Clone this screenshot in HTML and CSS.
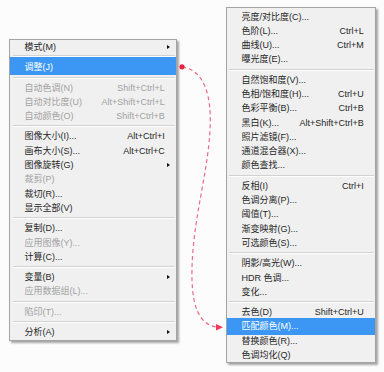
FILE: index.html
```html
<!DOCTYPE html>
<html lang="zh">
<head>
<meta charset="utf-8">
<link rel="stylesheet" href="styles.css">
</head>
<body>
<div class="stage">
  <div class="menu menu-left">
    <div class="row"><span>模式(M)</span><i class="arrow"></i></div>
    <div class="sep sep-short"></div>
    <div class="row active active-left"><span>调整(J)</span></div>
    <div class="sep"></div>
    <div class="row off"><span>自动色调(N)</span><span class="key">Shift+Ctrl+L</span></div>
    <div class="row off"><span>自动对比度(U)</span><span class="key">Alt+Shift+Ctrl+L</span></div>
    <div class="row off"><span>自动颜色(O)</span><span class="key">Shift+Ctrl+B</span></div>
    <div class="sep"></div>
    <div class="row"><span>图像大小(I)...</span><span class="key">Alt+Ctrl+I</span></div>
    <div class="row"><span>画布大小(S)...</span><span class="key">Alt+Ctrl+C</span></div>
    <div class="row"><span>图像旋转(G)</span><i class="arrow"></i></div>
    <div class="row off"><span>裁剪(P)</span></div>
    <div class="row"><span>裁切(R)...</span></div>
    <div class="row"><span>显示全部(V)</span></div>
    <div class="sep"></div>
    <div class="row"><span>复制(D)...</span></div>
    <div class="row off"><span>应用图像(Y)...</span></div>
    <div class="row"><span>计算(C)...</span></div>
    <div class="sep"></div>
    <div class="row"><span>变量(B)</span><i class="arrow"></i></div>
    <div class="row off"><span>应用数据组(L)...</span></div>
    <div class="sep"></div>
    <div class="row off"><span>陷印(T)...</span></div>
    <div class="sep"></div>
    <div class="row"><span>分析(A)</span><i class="arrow"></i></div>
  </div>
  <div class="menu menu-right">
    <div class="row"><span>亮度/对比度(C)...</span></div>
    <div class="row"><span>色阶(L)...</span><span class="key">Ctrl+L</span></div>
    <div class="row"><span>曲线(U)...</span><span class="key">Ctrl+M</span></div>
    <div class="row"><span>曝光度(E)...</span></div>
    <div class="sep"></div>
    <div class="row"><span>自然饱和度(V)...</span></div>
    <div class="row"><span>色相/饱和度(H)...</span><span class="key">Ctrl+U</span></div>
    <div class="row"><span>色彩平衡(B)...</span><span class="key">Ctrl+B</span></div>
    <div class="row"><span>黑白(K)...</span><span class="key">Alt+Shift+Ctrl+B</span></div>
    <div class="row"><span>照片滤镜(F)...</span></div>
    <div class="row"><span>通道混合器(X)...</span></div>
    <div class="row"><span>颜色查找...</span></div>
    <div class="sep"></div>
    <div class="row"><span>反相(I)</span><span class="key">Ctrl+I</span></div>
    <div class="row"><span>色调分离(P)...</span></div>
    <div class="row"><span>阈值(T)...</span></div>
    <div class="row"><span>渐变映射(G)...</span></div>
    <div class="row"><span>可选颜色(S)...</span></div>
    <div class="sep"></div>
    <div class="row"><span>阴影/高光(W)...</span></div>
    <div class="row"><span>HDR 色调...</span></div>
    <div class="row"><span>变化...</span></div>
    <div class="sep"></div>
    <div class="row"><span>去色(D)</span><span class="key">Shift+Ctrl+U</span></div>
    <div class="row active active-right"><span>匹配颜色(M)...</span></div>
    <div class="row"><span>替换颜色(R)...</span></div>
    <div class="row"><span>色调均化(Q)</span></div>
  </div>
  <svg class="link" width="384" height="372" viewBox="0 0 384 372">
    <path d="M182,67 C204,70 212,95 210,130 C208,172 193,220 192,268 C191,306 199,325 217,327" fill="none" stroke="#f06a86" stroke-width="1.2" stroke-dasharray="4 3"/>
    <path d="M216,324 L223,327.3 L216,330.5 Z" fill="#f03a5c"/>
    <circle cx="182" cy="66.8" r="2.6" fill="#e8223e"/>
  </svg>
</div>
</body>
</html>
```

FILE: styles.css
```css
html, body {
  margin: 0;
  padding: 0;
  background: #fcfcfc;
}

.stage {
  position: relative;
  width: 384px;
  height: 372px;
  display: flex;
  align-items: flex-start;
  font-family: "Liberation Sans", "Noto Sans CJK SC", sans-serif;
  font-size: 9px;
  color: #262626;
}

.menu {
  background: #f0f0f0;
  border: 1px solid #a3a3a3;
  box-shadow: 2px 2px 2px rgba(0, 0, 0, 0.35);
  box-sizing: border-box;
  display: flex;
  flex-direction: column;
}

.menu-left {
  margin-left: 9px;
  margin-top: 39px;
  width: 168px;
  padding: 0 0 1px 0;
}

.menu-right {
  margin-left: 49px;
  margin-top: 7px;
  width: 150px;
  padding: 1.5px 0 0 0;
}

.row {
  height: 14.3px;
  line-height: 14.3px;
  display: flex;
  justify-content: space-between;
  align-items: center;
  padding: 0 11.3px 0 14.5px;
  white-space: nowrap;
}

.menu-left .row {
  padding-left: 14.5px;
}

.row span {
  line-height: 14.3px;
}

.off {
  color: #a2a2a2;
}

.active {
  background: #3b97f3;
  color: #ffffff;
}

.active-left {
  height: 17.6px;
  padding-top: 3.3px;
  box-sizing: border-box;
  align-items: flex-start;
}

.active-right {
  box-shadow: 0 -1px 0 #3b97f3, 0 1px 0 #3b97f3;
}

.arrow {
  width: 0;
  height: 0;
  border-left: 3px solid #111;
  border-top: 2.5px solid transparent;
  border-bottom: 2.5px solid transparent;
  margin-right: -5.5px;
}

.sep {
  height: 6px;
  display: flex;
  flex-direction: column;
  justify-content: center;
  padding: 0 1px 0 3px;
}

.sep::before {
  content: "";
  display: block;
  height: 1px;
  background: #d2d2d2;
  border-bottom: 1px solid #ffffff;
}

.menu-right .sep {
  padding: 0 1px 0 2px;
}

.sep-short {
  height: 2.7px;
}

.link {
  position: absolute;
  left: 0;
  top: 0;
  pointer-events: none;
}
```
